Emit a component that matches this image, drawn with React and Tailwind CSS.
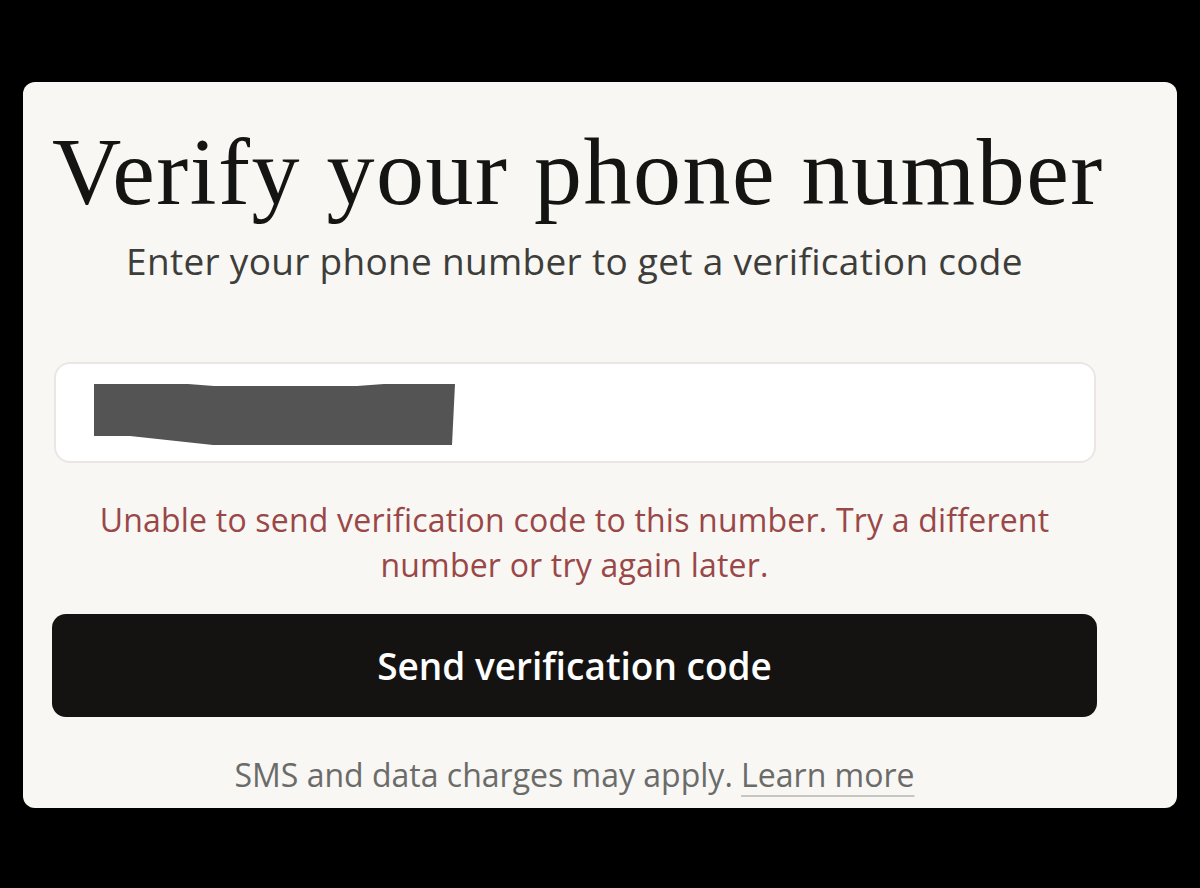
export default function App() {
  return (
    <div className="w-[1200px] h-[888px] bg-black pt-[82px] pl-[23px]">
      <div className="w-[1154px] h-[726px] bg-[#f8f7f4] rounded-[12px] pl-[29px] pr-[80px] flex flex-col overflow-hidden font-['Open_Sans',sans-serif]">
        <h1 className="mt-[90px] text-[96px] tracking-[1.5px] leading-[0] text-center text-[#141413] whitespace-nowrap font-['Liberation_Serif',serif]">
          Verify your phone number
        </h1>
        <p className="mt-[89px] text-[37px] tracking-[0.3px] leading-[0] text-center text-[#3d3d3a] whitespace-nowrap">
          Enter your phone number to get a verification code
        </p>
        <div className="mt-[101px] ml-[2px] mr-[1px] h-[101px] bg-white border-2 border-[#ebe6e4] rounded-[16px] flex items-center pl-[38px] pt-[4px]">
          <svg width="362" height="62" viewBox="0 0 362 62">
            <polygon points="0,0 94,0 120,2 263,2 290,0 361,0 358,61 119,61 36,52 0,52" fill="#545454" />
          </svg>
        </div>
        <p className="mt-[34px] text-[32px] tracking-[0.2px] leading-[45px] text-center text-[#9a4747] whitespace-nowrap">
          Unable to send verification code to this number. Try a different<br />number or try again later.
        </p>
        <button className="mt-[27px] h-[103px] rounded-[14px] bg-[#141312] text-white text-[37px] font-semibold">
          Send verification code
        </button>
        <p className="mt-[40px] text-[32px] leading-[36px] text-center text-[#6b6b69] whitespace-nowrap">
          SMS and data charges may apply. <span className="underline decoration-[#c8c6c2] underline-offset-[8px] decoration-2">Learn more</span>
        </p>
      </div>
    </div>
  );
}
